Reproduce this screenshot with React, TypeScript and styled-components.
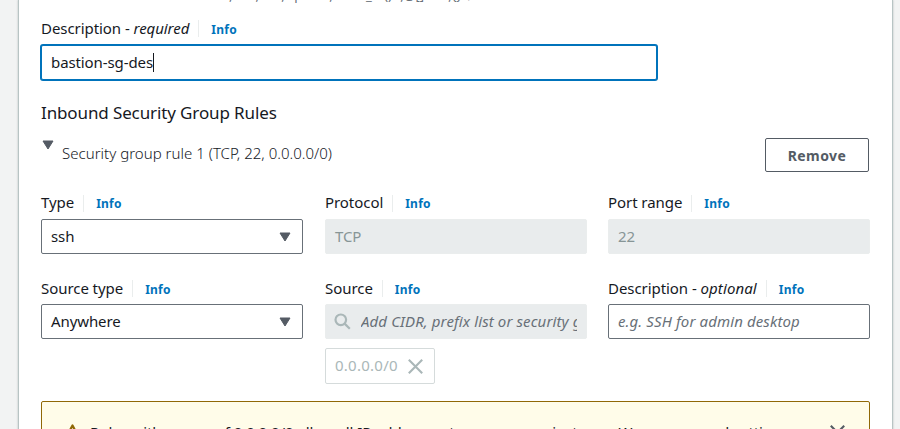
import React from 'react';
import styled, { createGlobalStyle } from 'styled-components';

const GlobalStyle = createGlobalStyle`
  * { box-sizing: border-box; }
  html, body { margin: 0; height: 429px; overflow: hidden; }
  body {
    background: #f2f3f3;
    color: #16191f;
    font: 15px/22px "Noto Sans", "Open Sans", sans-serif;
    letter-spacing: -0.06px;
    white-space: nowrap;
  }
`;

const Page = styled.div`
  height: 429px;
  overflow: hidden;
  padding: 0 7px 0 18px;
`;

const Panel = styled.main`
  display: flow-root;
  height: 440px;
  padding: 0 22px;
  background: #fff;
  border-left: 1px solid #b8c4c4;
  border-right: 1px solid #b8c4c4;
  box-shadow: 0 0 2px rgba(0, 28, 36, 0.25);
`;

const Hint = styled.p`
  margin: -14px 0 16px;
  height: 18px;
  color: #687078;
  font-size: 13px;
  line-height: 18px;
  letter-spacing: -0.12px;
`;

const CharacterList = styled.span`
  letter-spacing: -0.03px;
`;

const LabelRow = styled.div<{ $gap?: number }>`
  display: flex;
  align-items: center;
  height: 17px;
  margin-bottom: ${p => p.$gap ?? 7}px;
  line-height: 17px;
`;

const LabelText = styled.span<{ $raised?: boolean }>`
  padding-bottom: ${p => (p.$raised ? 2 : 0)}px;
`;

const Info = styled.a<{ $raised?: boolean }>`
  margin-left: 9px;
  padding-left: 12px;
  height: 17px;
  border-left: 1px solid #eaeded;
  color: #0073bb;
  font-size: 12px;
  font-weight: 700;
  line-height: ${p => (p.$raised ? 17 : 19)}px;
  letter-spacing: 0.25px;
`;

const Optional = styled.em`
  letter-spacing: 0.1px;
`;

const Control = styled.div<{ $kind?: 'disabled' | 'focused' }>`
  display: flex;
  align-items: center;
  height: 35px;
  padding: 0 9px;
  overflow: hidden;
  border-radius: 2px;
  line-height: 20px;
  border: 1px solid ${p => (p.$kind === 'disabled' ? '#eaeded' : p.$kind === 'focused' ? '#0073bb' : '#687078')};
  background: ${p => (p.$kind === 'disabled' ? '#e9eced' : '#fff')};
  color: ${p => (p.$kind === 'disabled' ? '#879596' : '#16191f')};
  box-shadow: ${p => (p.$kind === 'focused' ? '0 0 0 1px #0073bb' : 'none')};
`;

const Value = styled.span`
  padding-bottom: 2px;
  letter-spacing: -0.1px;
`;

const NameField = styled.div`
  width: 616px;
`;

const Cursor = styled.span`
  width: 1px;
  height: 19px;
  background: #16191f;
`;

const SelectControl = styled(Control)`
  justify-content: space-between;
  padding-right: 11px;
`;

const Placeholder = styled.em`
  flex: 1;
  overflow: hidden;
  padding-bottom: 2px;
  color: #687078;
  letter-spacing: 0.11px;
`;

const SectionTitle = styled.h3`
  margin: 21px 0 13px;
  font-size: 17px;
  font-weight: 400;
  line-height: 24px;
  letter-spacing: -0.12px;
`;

const RuleHeader = styled.div`
  display: flex;
  height: 34px;
  margin: 0 1px 23px 0;
  align-items: flex-start;
`;

const RuleToggle = styled.div`
  display: flex;
  flex: 1;
  gap: 8px;
  padding-left: 1px;
  svg { margin-top: 2px; }
`;

const RuleName = styled.span`
  padding-top: 4px;
  font-weight: 300;
  letter-spacing: 0.02px;
`;

const RemoveButton = styled.button`
  width: 104px;
  height: 34px;
  padding: 2px 0 0;
  border: 1px solid #545b64;
  border-radius: 2px;
  background: #fff;
  color: #545b64;
  font: 700 14px/22px "Noto Sans", sans-serif;
  letter-spacing: 0.4px;
`;

const RuleGrid = styled.div`
  display: grid;
  grid-template-columns: 284px 283px 262px;
  row-gap: 26px;
`;

const Field = styled.div`
  width: 262px;
`;

const SearchControl = styled(Control)`
  gap: 10px;
  padding-left: 8px;
`;

const Token = styled.div`
  display: flex;
  align-items: center;
  justify-content: space-between;
  width: 110px;
  height: 36px;
  margin-top: 9px;
  padding: 0 11px 0 9px;
  border: 1px solid #d5dbdb;
  border-radius: 2px;
  color: #aab7b8;
`;

const TokenText = styled(Value)`
  letter-spacing: 0.25px;
`;

const Alert = styled.section`
  display: flex;
  height: 66px;
  margin-top: 17px;
  padding: 19px 24px 0 23px;
  border: 1px solid #906806;
  border-radius: 2px;
  background: #fffce9;
`;

const AlertText = styled.p`
  flex: 1;
  margin: 0 0 0 10px;
  letter-spacing: -0.08px;
`;

const AlertIcon = styled.svg`
  margin-top: 3px;
`;

const DismissButton = styled.span`
  margin-top: 2px;
`;

const Caret = () => (
  <svg width="12" height="10" viewBox="0 0 12 10">
    <path d="M1 1h10L6 9z" fill="#545b64" stroke="#545b64" strokeLinejoin="round" />
  </svg>
);

const SearchIcon = () => (
  <svg width="17" height="17" viewBox="0 0 17 17" fill="none" stroke="#aab7b8" strokeWidth="2.2">
    <circle cx="6.8" cy="6.8" r="5.3" />
    <path d="m10.6 10.6 5.2 5.2" />
  </svg>
);

const CloseIcon = ({ color }: { color: string }) => (
  <svg width="15" height="15" viewBox="0 0 15 15" fill="none" stroke={color} strokeWidth="2.1">
    <path d="m.8.8 13.4 13.4M14.2.8.8 14.2" />
  </svg>
);

const Label = ({ children, gap, raised }: { children: React.ReactNode; gap?: number; raised?: boolean }) => (
  <LabelRow $gap={gap}>
    <LabelText $raised={raised}>{children}</LabelText>
    <Info $raised={raised}>Info</Info>
  </LabelRow>
);

export default function App() {
  return (
    <>
      <GlobalStyle />
      <Page>
        <Panel>
          <Hint>
            characters. Valid characters: a-z,
            <CharacterList>{' A-Z, 0-9, spaces, and ._-:/()#,@[]+=&;{}!$*'}</CharacterList>
          </Hint>
          <NameField>
            <Label gap={8}>Description - <em>required</em></Label>
            <Control $kind="focused"><Value>bastion-sg-des</Value><Cursor /></Control>
          </NameField>
          <SectionTitle>Inbound Security Group Rules</SectionTitle>
          <RuleHeader>
            <RuleToggle>
              <Caret />
              <RuleName>Security group rule 1 (TCP, 22, 0.0.0.0/0)</RuleName>
            </RuleToggle>
            <RemoveButton>Remove</RemoveButton>
          </RuleHeader>
          <RuleGrid>
            <Field>
              <Label raised>Type</Label>
              <SelectControl><Value>ssh</Value><Caret /></SelectControl>
            </Field>
            <Field>
              <Label raised>Protocol</Label>
              <Control $kind="disabled"><Value>TCP</Value></Control>
            </Field>
            <Field>
              <Label raised>Port range</Label>
              <Control $kind="disabled"><Value>22</Value></Control>
            </Field>
            <Field>
              <Label>Source type</Label>
              <SelectControl><Value>Anywhere</Value><Caret /></SelectControl>
            </Field>
            <Field>
              <Label>Source</Label>
              <SearchControl $kind="disabled">
                <SearchIcon />
                <Placeholder>Add CIDR, prefix list or security group</Placeholder>
              </SearchControl>
              <Token><TokenText>0.0.0.0/0</TokenText><CloseIcon color="#aab7b8" /></Token>
            </Field>
            <Field>
              <Label>Description - <Optional>optional</Optional></Label>
              <Control><Placeholder>e.g. SSH for admin desktop</Placeholder></Control>
            </Field>
          </RuleGrid>
          <Alert>
            <AlertIcon width="15" height="15" viewBox="0 0 16 16" fill="none" stroke="#906806" strokeWidth="2.4">
              <path d="M8 1.5 15 15H1zM8 6v5M8 12v2" strokeLinejoin="round" />
            </AlertIcon>
            <AlertText>
              Rules with source of 0.0.0.0/0 allow all IP addresses to access your instance. We recommend setting
            </AlertText>
            <DismissButton><CloseIcon color="#545b64" /></DismissButton>
          </Alert>
        </Panel>
      </Page>
    </>
  );
}
